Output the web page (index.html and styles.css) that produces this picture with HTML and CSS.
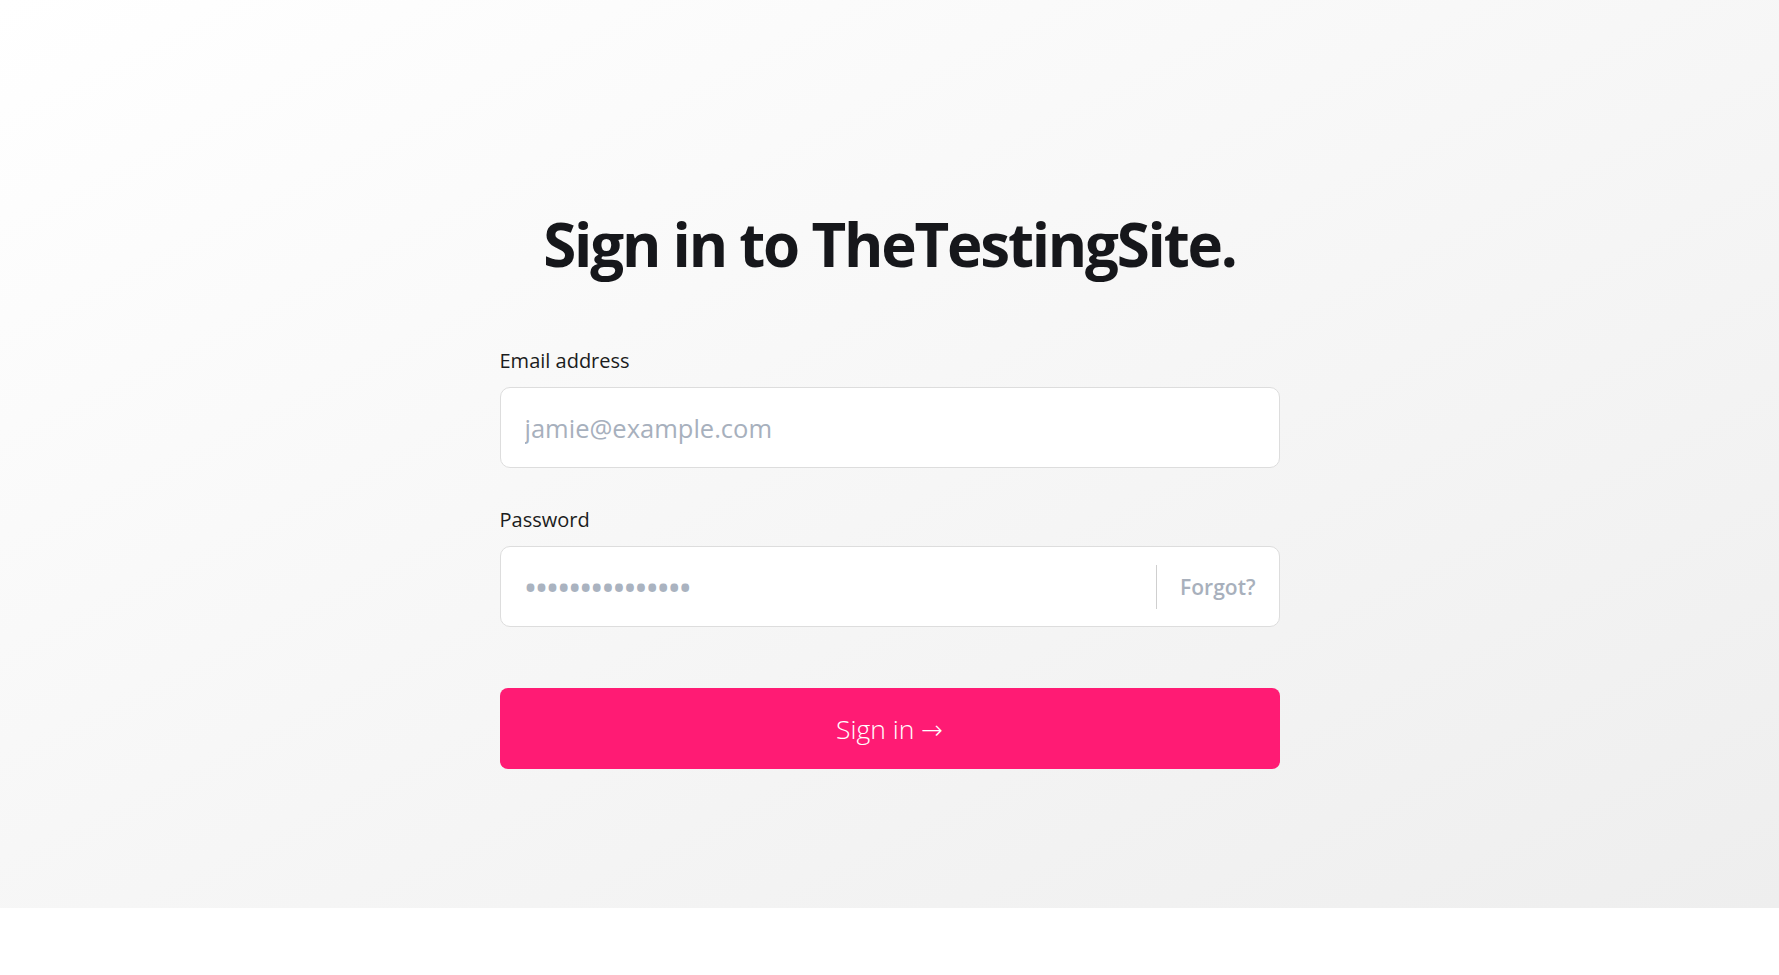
FILE: index.html
```html
<!DOCTYPE html>
<html lang="en">
<head>
<meta charset="utf-8">
<title>Sign in to TheTestingSite.</title>
<link rel="stylesheet" href="styles.css">
</head>
<body>
<main class="page">
  <form class="form" onsubmit="return false">
    <h1 class="title">Sign in to TheTestingSite.</h1>
    <div class="field">
      <label class="label" for="email">Email address</label>
      <div class="box">
        <input class="input" id="email" type="email" placeholder="jamie@example.com">
      </div>
    </div>
    <div class="field">
      <label class="label" for="password">Password</label>
      <div class="box">
        <input class="input input-pass" id="password" type="password" placeholder="•••••••••••••••">
        <span class="divider"></span>
        <a class="forgot" href="#">Forgot?</a>
      </div>
    </div>
    <button class="submit" type="submit">Sign in <span class="arrow">→</span></button>
  </form>
</main>
</body>
</html>
```

FILE: styles.css
```css
* { box-sizing: border-box; }
html, body { margin: 0; padding: 0; background: #ffffff; }
body { font-family: "Open Sans", "Noto Sans", sans-serif; color: #17181c; }

.page {
  height: 908px;
  background: linear-gradient(to bottom right, #ffffff 0%, #eeeeee 100%);
  padding-top: 207px;
}

.form {
  width: 780px;
  margin: 0 auto;
  display: flex;
  flex-direction: column;
}

.title {
  margin: 0 0 67px;
  font-size: 60px;
  line-height: 74px;
  font-weight: 700;
  letter-spacing: -2.2px;
  text-align: center;
  color: #16171b;
}

.field {
  display: flex;
  flex-direction: column;
  gap: 13px;
  margin-bottom: 39px;
}
.field + .field { margin-bottom: 61px; }

.label {
  font-size: 20px;
  line-height: 26px;
  font-weight: 500;
  color: #1b1c20;
}

.box {
  height: 81px;
  background: #ffffff;
  border: 1px solid #dddddd;
  border-radius: 10px;
  display: flex;
  align-items: center;
}

.input {
  flex: 1;
  min-width: 0;
  height: 100%;
  border: 0;
  outline: none;
  background: transparent;
  padding: 0 24px;
  font-family: inherit;
  font-size: 25.5px;
  color: #1b1c20;
}
.input::placeholder { color: #a7b0bd; }

.input-pass {
  padding-left: 23px;
  font-size: 37px;
  letter-spacing: -2.85px;
}
.input-pass::placeholder { color: #aab3c0; }

.divider {
  width: 1px;
  height: 44px;
  background: #cfcfcf;
}

.forgot {
  padding: 0 23px 0 23px;
  font-size: 21px;
  font-weight: 600;
  color: #a8b0bc;
  text-decoration: none;
}

.submit {
  height: 81px;
  border: 0;
  border-radius: 8px;
  background: #ff1b74;
  color: #ffffff;
  font-family: inherit;
  font-size: 26.5px;
  font-weight: 300;
  cursor: pointer;
}

.arrow {
  font-family: "DejaVu Sans", sans-serif;
  font-size: 26px;
  font-weight: 200;
}
```
